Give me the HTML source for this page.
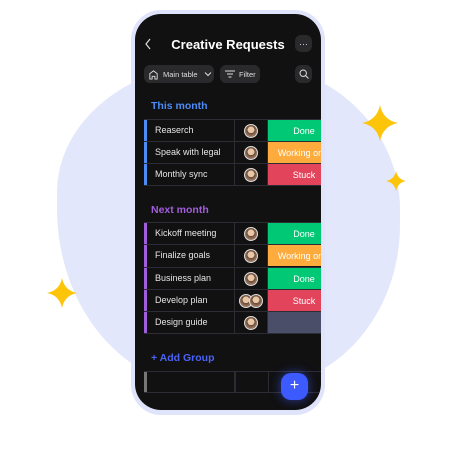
<!DOCTYPE html>
<html><head><style>
*{margin:0;padding:0;box-sizing:border-box}
body{width:456px;height:456px;background:#fff;position:relative;overflow:hidden;font-family:"Liberation Sans",sans-serif}
.blob{position:absolute;left:57px;top:62px;width:343px;height:326px;background:#e3e7fb;border-radius:48% 46% 42% 44% / 40% 45% 50% 55%}
.phone{position:absolute;left:131px;top:10px;width:194px;height:405px;background:#e0e4fb;border-radius:30px}
.scr{position:absolute;left:4px;top:4px;width:186px;height:396px;background:#111112;border-radius:26px;overflow:hidden}
.a{position:absolute}
.t{color:#fff;font-weight:bold;font-size:13px}
.chip{position:absolute;background:#2a2a2d;border-radius:6px;color:#ddd;font-size:7.5px;display:flex;align-items:center}
.row{position:absolute;left:9px;height:22px;width:200px;border-top:1px solid #2c2c34}
.name{position:absolute;left:3px;top:0;width:88px;height:100%;border-right:1px solid #2c2c34;color:#e6e6e6;font-size:9px;line-height:21px;padding-left:8px}
.av{position:absolute;left:100px;top:4px;width:14px;height:14px;border-radius:50%;background:radial-gradient(circle at 50% 40%,#e8c6a8 35%,#6b4a35 37%,#a88770 80%);border:1px solid #ddd}
.av2{position:absolute;left:123px;top:0;width:1px;height:100%;background:#2c2c34}
.st{position:absolute;left:124px;top:0;width:72px;height:100%;color:#fff;font-size:9px;line-height:22px;text-align:center}
.bar{position:absolute;left:9px;width:3px}
</style></head><body>
<div class="blob"></div>
<svg class="a" style="left:362px;top:105px" width="36" height="36" viewBox="0 0 36 36"><path d="M18 0Q21 15 36 18Q21 21 18 36Q15 21 0 18Q15 15 18 0Z" fill="#fdc50a"/></svg>
<svg class="a" style="left:386px;top:171px" width="20" height="20" viewBox="0 0 36 36"><path d="M18 0Q21 15 36 18Q21 21 18 36Q15 21 0 18Q15 15 18 0Z" fill="#fdc50a"/></svg>
<svg class="a" style="left:47px;top:278px" width="30" height="30" viewBox="0 0 36 36"><path d="M18 0Q21 15 36 18Q21 21 18 36Q15 21 0 18Q15 15 18 0Z" fill="#fdc50a"/></svg>
<div class="phone"><div class="scr">
<svg class="a" style="left:9px;top:24px" width="8" height="12" viewBox="0 0 8 12"><path d="M6 1L2 6L6 11" stroke="#ddd" stroke-width="1.2" fill="none"/></svg>
<div class="a t" style="left:0;width:186px;text-align:center;top:23px">Creative Requests</div>
<div class="chip" style="left:160px;top:21px;width:17px;height:17px;justify-content:center;font-size:9px;color:#ddd">···</div>
<div class="chip" style="left:9px;top:51px;width:70px;height:18px;padding-left:4px">
<svg width="11" height="11" viewBox="0 0 12 12"><path d="M2 11V5L6 2L10 5V11H7.5V8H4.5V11Z" stroke="#ddd" fill="none" stroke-width="1"/></svg>
<span style="margin-left:4px">Main table</span>
<svg style="margin-left:6px" width="8" height="6" viewBox="0 0 8 6"><path d="M1 1.5L4 4.5L7 1.5" stroke="#ddd" fill="none"/></svg></div>
<div class="chip" style="left:85px;top:51px;width:40px;height:18px;padding-left:5px">
<svg width="10" height="8" viewBox="0 0 10 8"><path d="M0 1H10M2 4H8M3.5 7H6.5" stroke="#ddd"/></svg><span style="margin-left:4px">Filter</span></div>
<div class="chip" style="left:160px;top:51px;width:17px;height:18px;justify-content:center">
<svg width="10" height="10" viewBox="0 0 10 10"><circle cx="4.2" cy="4.2" r="3.2" stroke="#ddd" fill="none"/><path d="M6.5 6.5L9.5 9.5" stroke="#ddd"/></svg></div>

<div class="a" style="left:16px;top:86px;color:#4c8cf7;font-weight:bold;font-size:10.5px">This month</div>
<div class="bar" style="top:105px;height:66px;background:#4c8cf7"></div>
<div class="row" style="top:105px"><div class="name">Reaserch</div><div class="av"></div><div class="av2"></div><div class="st" style="background:#00c875">Done</div></div>
<div class="row" style="top:127px"><div class="name">Speak with legal</div><div class="av"></div><div class="av2"></div><div class="st" style="background:#fdab3d;white-space:nowrap">Working on it</div></div>
<div class="row" style="top:149px;border-bottom:1px solid #2c2c34;height:23px"><div class="name">Monthly sync</div><div class="av"></div><div class="av2"></div><div class="st" style="background:#e2445c">Stuck</div></div>

<div class="a" style="left:16px;top:190px;color:#a25ddc;font-weight:bold;font-size:10.5px">Next month</div>
<div class="bar" style="top:208px;height:112px;background:#a25ddc"></div>
<div class="row" style="top:208px"><div class="name">Kickoff meeting</div><div class="av"></div><div class="av2"></div><div class="st" style="background:#00c875">Done</div></div>
<div class="row" style="top:230px"><div class="name">Finalize goals</div><div class="av"></div><div class="av2"></div><div class="st" style="background:#fdab3d;white-space:nowrap">Working on it</div></div>
<div class="row" style="top:253px"><div class="name">Business plan</div><div class="av"></div><div class="av2"></div><div class="st" style="background:#00c875">Done</div></div>
<div class="row" style="top:275px"><div class="name">Develop plan</div><div class="av" style="left:95px"></div><div class="av" style="left:105px"></div><div class="av2"></div><div class="st" style="background:#e2445c">Stuck</div></div>
<div class="row" style="top:297px;height:23px;border-bottom:1px solid #2c2c34"><div class="name">Design guide</div><div class="av"></div><div class="av2"></div><div class="st" style="background:#4b4e69"></div></div>

<div class="a" style="left:16px;top:338px;color:#4a63f5;font-weight:bold;font-size:10.5px">+ Add Group</div>
<div class="bar" style="top:357px;height:22px;background:#777"></div>
<div class="row" style="top:357px;border-bottom:1px solid #2c2c34"><div class="name"></div><div class="av2" style="left:124px"></div><div class="av2" style="left:91px"></div></div>
<div class="a" style="left:146px;top:359px;width:27px;height:27px;border-radius:10px;background:#3d5afe;box-shadow:0 0 10px rgba(61,90,254,.6);color:#fff;font-size:16px;text-align:center;line-height:26px">+</div>
</div></div>
</body></html>
